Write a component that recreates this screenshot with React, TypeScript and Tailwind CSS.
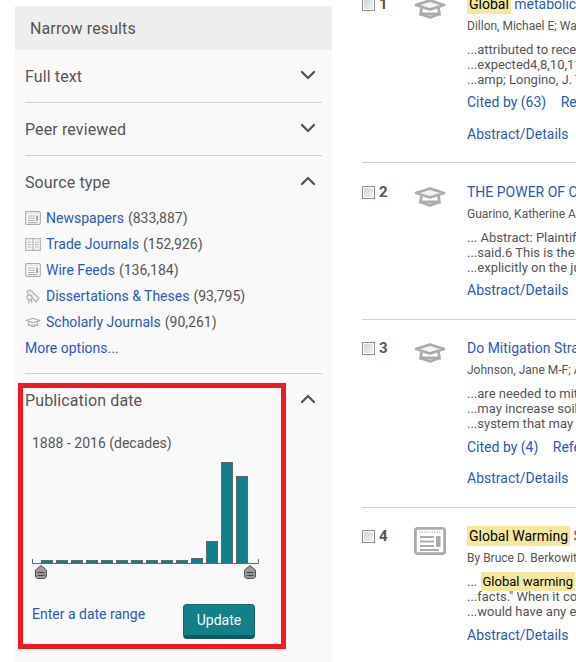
import { ChevronDown, ChevronUp } from 'lucide-react'
import type { ReactNode } from 'react'

const BARS = [560, 560, 560, 560, 560, 560, 560, 560, 560, 560, 558, 541, 462, 476]

function Cap({ className, weight = 2.8 }: { className: string; weight?: number }) {
  return (
    <svg viewBox="0 0 32 20" className={className} fill="none" stroke="#ababab">
      <path d="M16 1.5 L30 6 L16 10.5 L2 6 Z" strokeWidth={weight} strokeLinejoin="round" fill="#f4f4f4" />
      <path d="M7.5 9 L6.5 15 Q16 15 25.5 15 L24.5 9" strokeWidth={weight} />
      <path d="M6.5 15 L16 18.5 L25.5 15" strokeWidth={weight} strokeLinejoin="round" />
    </svg>
  )
}

function News({ className, weight = 2.8 }: { className: string; weight?: number }) {
  return (
    <svg viewBox="0 0 32 28" className={className} fill="none" stroke="#ababab">
      <rect x="1.4" y="1.4" width="29.2" height="25.2" rx="2" strokeWidth={weight} fill="#fff" />
      <path d="M5 5 H27" strokeWidth="1.2" strokeDasharray="1.5 1" />
      <path d="M6 10 H20 M6 14.5 H20 M6 19 H20 M6 23 H25" strokeWidth="2" />
      <rect x="22" y="9" width="4.5" height="11" fill="#ababab" stroke="none" />
    </svg>
  )
}

function Book({ className }: { className: string }) {
  return (
    <svg viewBox="0 0 16 13" className={className} fill="none" stroke="#b5b5b5">
      <rect x="0.6" y="0.6" width="14.8" height="11.8" strokeWidth="1.2" fill="#f4f4f4" />
      <path d="M8 1 V12" strokeWidth="1.2" />
      <path d="M2.5 4 H6 M2.5 6.5 H6 M2.5 9 H6 M10 4 H13.5 M10 6.5 H13.5 M10 9 H13.5" strokeWidth="1.2" />
    </svg>
  )
}

function Diploma({ className }: { className: string }) {
  return (
    <svg viewBox="0 0 16 15" className={className} fill="none" stroke="#b5b5b5">
      <path d="M2 2 L5 1 L14 9 L11 13 L3 5 Z" strokeWidth="1.3" fill="#f0f0f0" />
      <circle cx="4.5" cy="8.5" r="2.6" strokeWidth="1.3" fill="#f0f0f0" />
      <path d="M4 11 L3.5 14.5 M6 10.5 L7 14" strokeWidth="1.3" />
    </svg>
  )
}

function Mark({ children }: { children: ReactNode }) {
  return <span className="bg-[#f5e89e] text-black px-[2px] py-[2px]">{children}</span>
}

function Facet({ label, icon, count }: { label: string; icon: ReactNode; count: string }) {
  return (
    <div className="flex items-center h-[26px] text-[14px]">
      <span className="w-[21px] flex items-center">{icon}</span>
      <a className="text-[#2b5ab4]">{label}</a>
      <span className="ml-[4px]">{count}</span>
    </div>
  )
}

function Heading({ label, open }: { label: string; open?: boolean }) {
  return (
    <div className="flex items-center justify-between h-[52px] pt-[2px] text-[16px] tracking-[0.12px]">
      <span>{label}</span>
      {open ? (
        <ChevronUp size={24} strokeWidth={2.3} className="text-[#555] mr-[2px] -mt-[5px]" />
      ) : (
        <ChevronDown size={24} strokeWidth={2.3} className="text-[#555] mr-[2px] -mt-[5px]" />
      )}
    </div>
  )
}

function Result({
  n, icon, title, authors, lines, cited, top, bottom, citedGap, absGap, last,
}: {
  n: number
  icon: ReactNode
  title: ReactNode
  authors: string
  lines: ReactNode[]
  cited?: ReactNode
  top: string
  bottom: string
  citedGap?: string
  absGap: string
  last?: boolean
}) {
  return (
    <div className={`flex whitespace-nowrap ${top} ${bottom} ${last ? '' : 'border-b border-[#cfcfcf]'}`}>
      <div className="w-[52px] shrink-0 flex items-start pt-[5px]">
        <div className="w-[13px] h-[13px] border border-[#8c8c8c] bg-gradient-to-br from-[#d0d0d0] to-[#f7f7f7] shadow-[inset_0_0_0_1px_#fff]" />
        <span className="ml-[4px] -mt-[4px] text-[15px] font-bold leading-[20px] text-[#555]">{n}</span>
      </div>
      <div className="w-[53px] shrink-0 pt-[6px]">{icon}</div>
      <div className="min-w-0 flex-1 overflow-hidden">
        <div className="h-[22px] leading-[22px] text-[14px] text-[#2b5ab4]">{title}</div>
        <div className="h-[22px] leading-[22px] text-[12px] text-[#555]">{authors}</div>
        <div className="mt-[5px] text-[13px] leading-[15px] text-[#555]">
          {lines.map((l, i) => <div key={i}>{l}</div>)}
        </div>
        {cited && <div className={`h-[20px] leading-[20px] text-[14px] text-[#2b5ab4] ${citedGap}`}>{cited}</div>}
        <div className={`h-[20px] leading-[20px] text-[14px] text-[#2b5ab4] ${absGap}`}>Abstract/Details</div>
      </div>
    </div>
  )
}

export default function App() {
  return (
    <div className="relative flex w-[576px] h-[662px] overflow-hidden bg-white text-[#555] font-['Roboto',sans-serif]">
      <aside className="ml-[15px] mt-[6px] w-[317px] shrink-0 bg-[#f9f9f9]">
        <div className="h-[44px] bg-[#eeeeee] pl-[15px] pt-[2px] flex items-center text-[16px] tracking-[0.12px]">Narrow results</div>
        <div className="px-[10px]">
          <div className="border-b border-[#cfcfcf]"><Heading label="Full text" /></div>
          <div className="border-b border-[#cfcfcf]"><Heading label="Peer reviewed" /></div>
          <div className="border-b border-[#cfcfcf] pb-[12px]">
            <Heading label="Source type" open />
            <div className="-mt-[3px]">
              <Facet label="Newspapers" count="(833,887)" icon={<News className="w-[16px] h-[14px]" weight={2.4} />} />
              <Facet label="Trade Journals" count="(152,926)" icon={<Book className="w-[16px] h-[13px]" />} />
              <Facet label="Wire Feeds" count="(136,184)" icon={<News className="w-[16px] h-[14px]" weight={2.4} />} />
              <Facet label="Dissertations & Theses" count="(93,795)" icon={<Diploma className="w-[16px] h-[15px]" />} />
              <Facet label="Scholarly Journals" count="(90,261)" icon={<Cap className="w-[16px] h-[11px]" weight={2.2} />} />
              <div className="h-[26px] flex items-center text-[14px] text-[#2b5ab4]">More options...</div>
            </div>
          </div>
          <Heading label="Publication date" open />
          <div className="pl-[7px]">
            <div className="h-[20px] leading-[20px] text-[14px] mt-[7px] mb-[7px]">1888 - 2016 (decades)</div>
            <svg width="232" height="122" viewBox="30 460 232 122" className="block -ml-[2px]">
              {BARS.map((y, i) => (
                <rect key={i} x={41.5 + i * 15} y={y + 0.5} width={11} height={563 - y} fill="#12808a" stroke="#5f6a6c" />
              ))}
              <path d="M32.5 559 V563.5 H258.5 V559" fill="none" stroke="#4b7378" />
              {[41, 250].map(x => (
                <g key={x}>
                  <path d={`M${x - 5.5} 570 L${x} 565.5 L${x + 5.5} 570 V577 L${x + 3.5} 578.5 H${x - 3.5} L${x - 5.5} 577 Z`} fill="#9a9a9a" stroke="#555" />
                  <path d={`M${x - 3.5} 572.5 H${x + 3.5} M${x - 3.5} 575.5 H${x + 3.5}`} stroke="#444" />
                </g>
              ))}
            </svg>
            <div className="flex items-start justify-between mt-[22px] pr-[67px]">
              <a className="text-[14px] text-[#2b5ab4] leading-[20px]">Enter a date range</a>
              <button className="w-[72px] h-[35px] mr-0 rounded-[4px] border border-[#0f6a72] border-b-[4px] border-b-[#0d5b62] bg-[#12808a] text-white text-[14px]">Update</button>
            </div>
          </div>
        </div>
      </aside>

      <main className="ml-[30px] flex-1 min-w-0">
        <div className="-mt-[7px]">
          <Result
            n={1}
            icon={<Cap className="w-[32px] h-[20px]" />}
            title={<><Mark>Global</Mark> metabolic theory</>}
            authors="Dillon, Michael E; Wang, George"
            lines={['...attributed to recent', '...expected4,8,10,11 to', '...amp; Longino, J. T.']}
            cited={<span>Cited by (63) <span className="ml-[11px]">References</span></span>}
            top="pt-0"
            bottom="pb-[18px]"
            citedGap="mt-[5px]"
            absGap="mt-[12px]"
          />
          <Result
            n={2}
            icon={<Cap className="w-[32px] h-[20px]" />}
            title="THE POWER OF CLIMATE"
            authors="Guarino, Katherine A"
            lines={['... Abstract: Plaintiffs', '...said.6 This is the only', '...explicitly on the judge']}
            top="pt-[18px]"
            bottom="pb-[19px]"
            absGap="mt-[5px]"
          />
          <Result
            n={3}
            icon={<Cap className="w-[32px] h-[20px]" />}
            title="Do Mitigation Strategies"
            authors="Johnson, Jane M-F; Archer"
            lines={['...are needed to mitigate', '...may increase soil carbon', '...system that may also']}
            cited={<span>Cited by (4) <span className="ml-[11px]">References</span></span>}
            top="pt-[17px]"
            bottom="pb-[19px]"
            citedGap="mt-[6px]"
            absGap="mt-[11px]"
          />
          <Result
            n={4}
            icon={<News className="w-[32px] h-[28px] -mt-[4px]" />}
            title={<><Mark>Global Warming</Mark> <span className="text-[#c0392b]">Skeptic</span></>}
            authors="By Bruce D. Berkowitz and"
            lines={[<>... <Mark>Global warming</Mark> is</>, '...facts." When it comes', '...would have any effect']}
            top="pt-[17px]"
            bottom="pb-[17px]"
            absGap="mt-[6px]"
            last
          />
        </div>
      </main>

      <div className="absolute left-[18px] top-[383px] w-[268px] h-[266px] border-[5px] border-[#ed1c24]" />
    </div>
  )
}
